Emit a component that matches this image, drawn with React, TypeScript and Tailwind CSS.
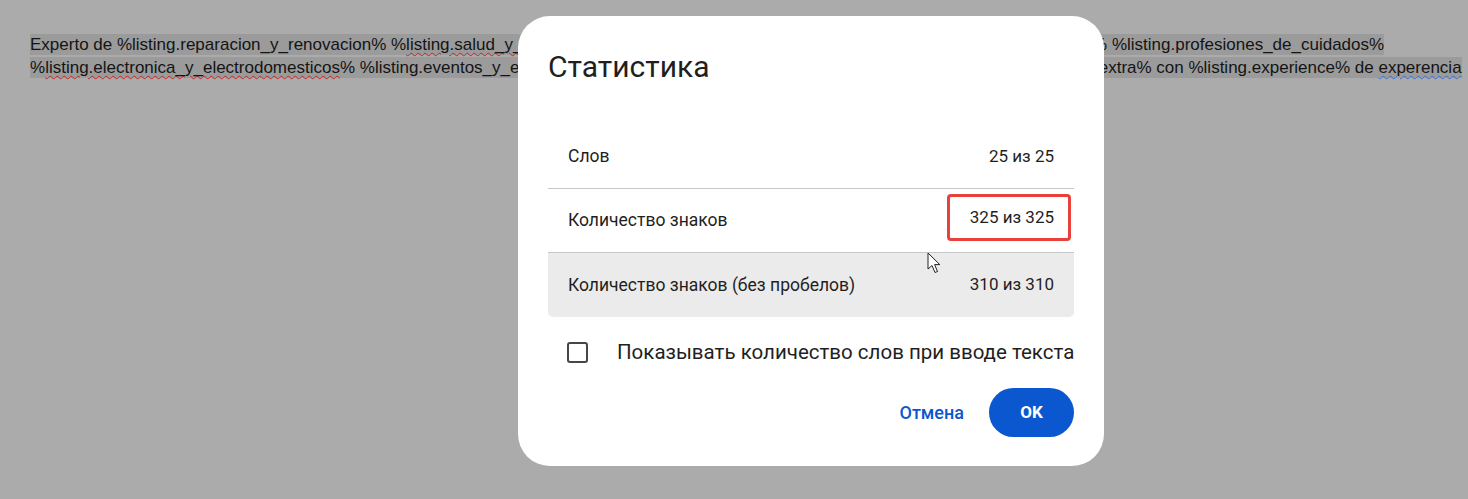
import type { ReactNode } from 'react';

interface StatRowProps {
  label: string;
  value: ReactNode;
  shaded?: boolean;
  divider?: boolean;
}

function StatRow({ label, value, shaded, divider }: StatRowProps) {
  return (
    <div
      className={`flex h-[64px] items-center justify-between px-5 text-[17px] text-[#1f1f1f] ${
        divider ? 'border-b border-[#c7c7c7]' : ''
      } ${shaded ? 'rounded-b-[5px] bg-[#ebebeb]' : ''}`}
    >
      <span className="text-[17.5px]">{label}</span>
      {value}
    </div>
  );
}

function Cursor() {
  return (
    <svg
      width="16"
      height="23"
      viewBox="0 0 16 23"
      className="pointer-events-none absolute left-[379px] top-[127px]"
    >
      <path
        d="M1 1 L1 17 L5 13.5 L8 20.5 L10.5 19.5 L7.6 12.6 L12.8 12.6 Z"
        fill="#ffffff"
        stroke="#222222"
        strokeWidth="1"
        strokeLinejoin="round"
      />
    </svg>
  );
}

export default function App() {
  return (
    <div className="relative h-[499px] w-[1468px] overflow-hidden bg-[#ababab]">
      {/* document text behind the modal */}
      <div
        className="whitespace-nowrap px-[30px] pt-[33px] text-[17px] leading-[23px] text-[#141414]"
        style={{ fontFamily: '"Liberation Sans", Arial, sans-serif' }}
      >
        <span className="bg-[#9b9b9b] py-[1px]">
          Experto de %listing.reparacion_y_renovacion% %
          <span className="underline decoration-[#c62828] decoration-wavy decoration-1 underline-offset-2">
            listing.salud_y_belleza
          </span>
          % %listing.clases_y_formacion% %listing.mascotas% %listing.hogar%
          %listing.profesiones_de_cuidados%{' '}
        </span>
        <br />
        <span className="bg-[#9b9b9b] py-[1px]">
          %
          <span className="underline decoration-[#c62828] decoration-wavy decoration-1 underline-offset-2">
            listing.electronica_y_electrodomesticos
          </span>
          % %listing.eventos_y_entretenimiento% %listing.transporte_y_mudanzas%
          %listing.otros_servicios_extra% con %listing.experience% de{' '}
          <span className="underline decoration-[#3b6fd6] decoration-wavy decoration-1 underline-offset-2">
            experencia
          </span>
          {'  '}
        </span>
      </div>

      {/* modal */}
      <div
        className="absolute left-[518px] top-[16px] flex h-[450px] w-[586px] flex-col rounded-[32px] bg-white px-[30px] pt-[33px]"
        style={{ fontFamily: 'Roboto, "Noto Sans", sans-serif' }}
      >
        <h2 className="text-[30px] leading-[36px] text-[#1f1f1f]">Статистика</h2>

        <div className="relative mt-[40px] flex flex-col">
          <StatRow label="Слов" value={<span>25 из 25</span>} divider />
          <StatRow
            label="Количество знаков"
            value={
              <span className="-mr-[17px] flex h-[47px] w-[124px] -translate-y-[3px] items-center justify-end rounded-[4px] border-[3px] border-[#e8403a] pr-[14px]">
                325 из 325
              </span>
            }
            divider
          />
          <StatRow label="Количество знаков (без пробелов)" value={<span>310 из 310</span>} shaded />
          <Cursor />
        </div>

        <label className="mt-[21px] flex items-center gap-[29px] whitespace-nowrap pl-[19px] text-[20.5px] leading-[28px] text-[#1f1f1f]">
          <span className="h-[21px] w-[21px] shrink-0 rounded-[3px] border-2 border-[#444746]" />
          <span>Показывать количество слов при вводе текста</span>
        </label>

        <div className="mt-[22px] flex items-center justify-end gap-[25px]">
          <button className="text-[18px] font-medium text-[#0b57d0]">Отмена</button>
          <button className="h-[49px] w-[85px] rounded-full bg-[#0b57d0] text-[17px] font-bold text-white">
            OK
          </button>
        </div>
      </div>
    </div>
  );
}
